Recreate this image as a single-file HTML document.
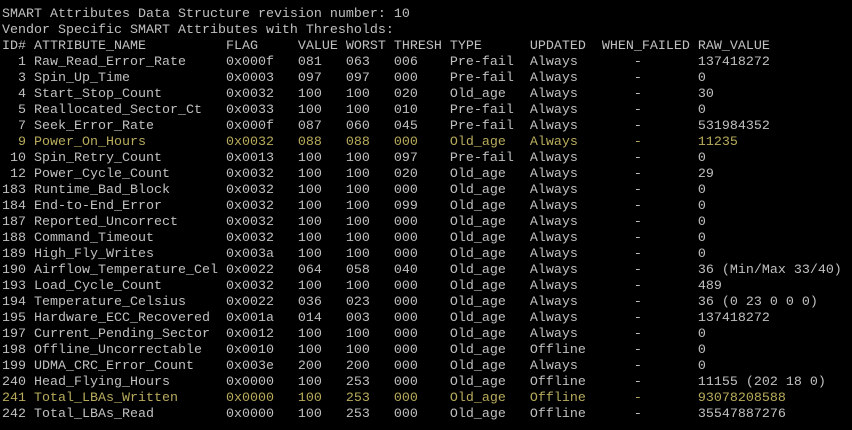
<!DOCTYPE html>
<html><head><meta charset="utf-8"><style>
html,body{margin:0;padding:0;background:#000;width:852px;height:430px;overflow:hidden}
pre{margin:0;position:absolute;left:2px;top:7px;font-family:"Liberation Mono",monospace;font-size:13.33px;line-height:16px;color:#c0c0c0;white-space:pre}
.y{color:#b8ac5c}
</style></head><body><pre>SMART Attributes Data Structure revision number: 10
Vendor Specific SMART Attributes with Thresholds:
ID# ATTRIBUTE_NAME          FLAG     VALUE WORST THRESH TYPE      UPDATED  WHEN_FAILED RAW_VALUE
  1 Raw_Read_Error_Rate     0x000f   081   063   006    Pre-fail  Always       -       137418272
  3 Spin_Up_Time            0x0003   097   097   000    Pre-fail  Always       -       0
  4 Start_Stop_Count        0x0032   100   100   020    Old_age   Always       -       30
  5 Reallocated_Sector_Ct   0x0033   100   100   010    Pre-fail  Always       -       0
  7 Seek_Error_Rate         0x000f   087   060   045    Pre-fail  Always       -       531984352
<span class="y">  9 Power_On_Hours          0x0032   088   088   000    Old_age   Always       -       11235</span>
 10 Spin_Retry_Count        0x0013   100   100   097    Pre-fail  Always       -       0
 12 Power_Cycle_Count       0x0032   100   100   020    Old_age   Always       -       29
183 Runtime_Bad_Block       0x0032   100   100   000    Old_age   Always       -       0
184 End-to-End_Error        0x0032   100   100   099    Old_age   Always       -       0
187 Reported_Uncorrect      0x0032   100   100   000    Old_age   Always       -       0
188 Command_Timeout         0x0032   100   100   000    Old_age   Always       -       0
189 High_Fly_Writes         0x003a   100   100   000    Old_age   Always       -       0
190 Airflow_Temperature_Cel 0x0022   064   058   040    Old_age   Always       -       36 (Min/Max 33/40)
193 Load_Cycle_Count        0x0032   100   100   000    Old_age   Always       -       489
194 Temperature_Celsius     0x0022   036   023   000    Old_age   Always       -       36 (0 23 0 0 0)
195 Hardware_ECC_Recovered  0x001a   014   003   000    Old_age   Always       -       137418272
197 Current_Pending_Sector  0x0012   100   100   000    Old_age   Always       -       0
198 Offline_Uncorrectable   0x0010   100   100   000    Old_age   Offline      -       0
199 UDMA_CRC_Error_Count    0x003e   200   200   000    Old_age   Always       -       0
240 Head_Flying_Hours       0x0000   100   253   000    Old_age   Offline      -       11155 (202 18 0)
<span class="y">241 Total_LBAs_Written      0x0000   100   253   000    Old_age   Offline      -       93078208588</span>
242 Total_LBAs_Read         0x0000   100   253   000    Old_age   Offline      -       35547887276</pre></body></html>
